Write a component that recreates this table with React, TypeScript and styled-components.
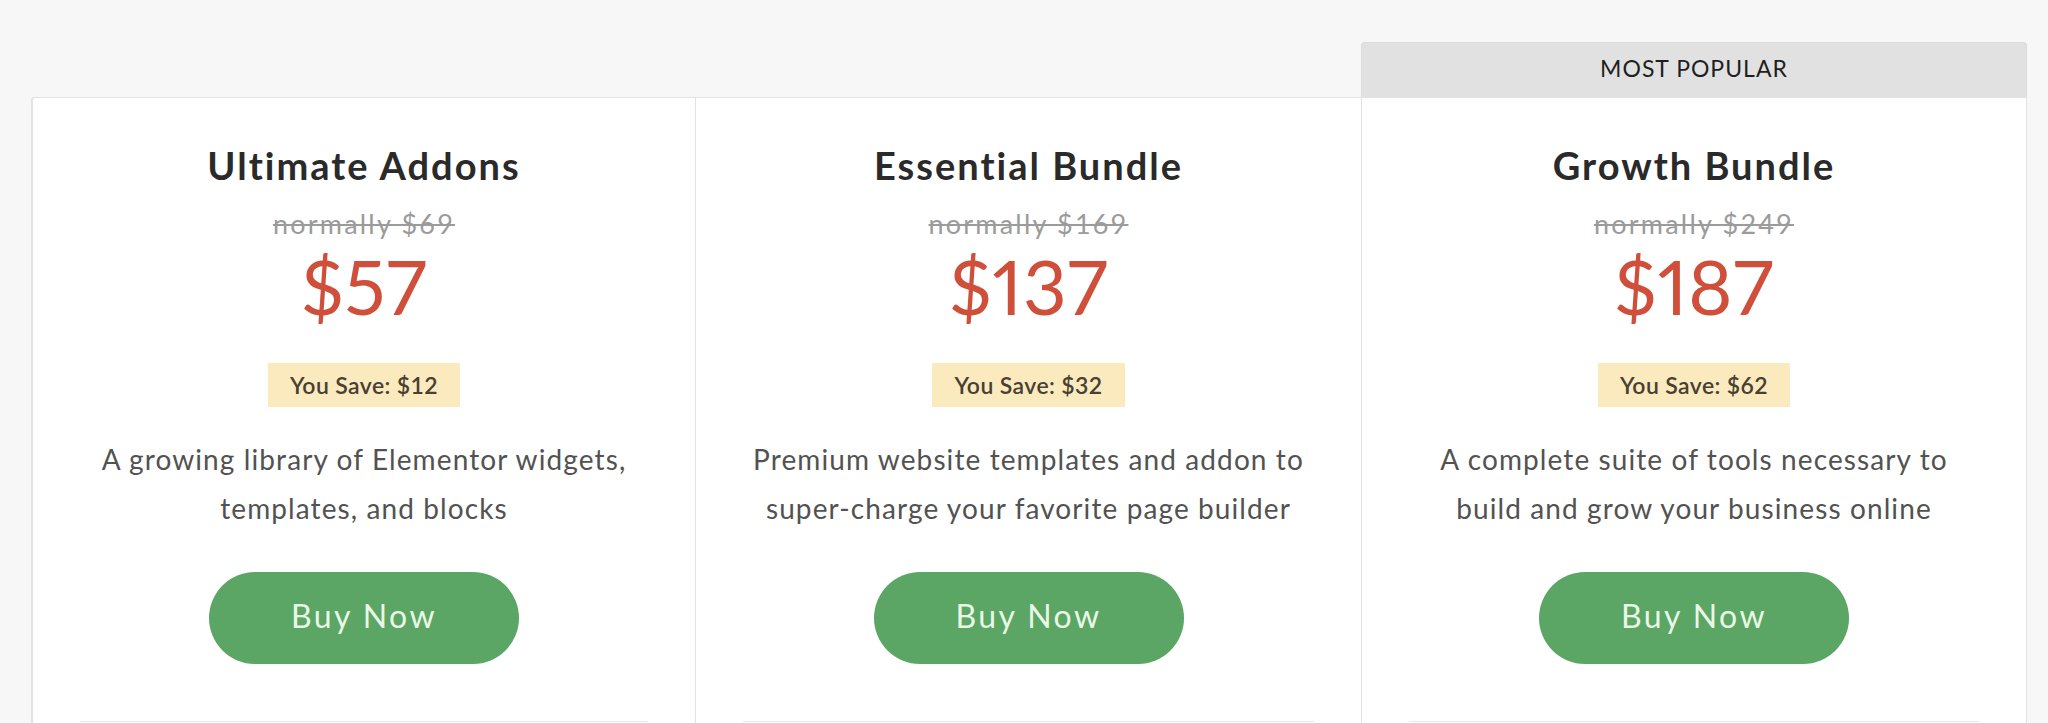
import React from "react";
import styled, { createGlobalStyle } from "styled-components";

const GlobalStyle = createGlobalStyle`
  html, body {
    margin: 0;
    padding: 0;
    background: #f7f7f7;
    font-family: Lato, "Open Sans", Arial, sans-serif;
    -webkit-font-smoothing: antialiased;
  }
  * { box-sizing: border-box; }
`;

const Page = styled.div`
  padding: 42px 21px 0 31px;
  height: 723px;
  overflow: hidden;
`;

const Grid = styled.div`
  display: grid;
  grid-template-columns: 664px 666px 666px;
`;

const Column = styled.div`
  display: flex;
  flex-direction: column;
`;

const BadgeSlot = styled.div<{ $popular?: boolean }>`
  height: 55px;
  padding-bottom: 4px;
  display: flex;
  align-items: center;
  justify-content: center;
  background: ${(p) => (p.$popular ? "#e1e1e1" : "transparent")};
  border: ${(p) => (p.$popular ? "1px solid #dcdcdc" : "none")};
  border-bottom: none;
  border-radius: 4px 4px 0 0;
  color: #1f1f1f;
  font-size: 23px;
  letter-spacing: 1px;
  text-transform: uppercase;
`;

const Card = styled.div<{ $first?: boolean; $last?: boolean }>`
  background: #ffffff;
  border-top: 1px solid #e2e2e2;
  border-left: ${(p) => (p.$first ? "2px" : "1px")} solid #e2e2e2;
  border-right: ${(p) => (p.$last ? "1px solid #e2e2e2" : "none")};
  border-top-left-radius: ${(p) => (p.$first ? "4px" : "0")};
  padding: 45px 47px 0;
  display: flex;
  flex-direction: column;
  align-items: center;
  text-align: center;
  min-height: 800px;
`;

const Title = styled.h2`
  margin: 0;
  font-size: 38px;
  line-height: 44px;
  font-weight: 700;
  color: #2a2a2a;
  letter-spacing: 2px;
`;

const OldPrice = styled.div`
  margin-top: 21px;
  font-size: 27px;
  line-height: 32px;
  color: #9b9b9b;
  text-decoration: line-through;
  letter-spacing: 2.2px;
`;

const Price = styled.div`
  margin-top: 6px;
  font-size: 76px;
  line-height: 80px;
  color: #cf4f3b;
  font-weight: 400;
  letter-spacing: 0.5px;
  font-variant-numeric: proportional-nums;
`;

const Save = styled.div`
  margin-top: 37px;
  height: 44px;
  padding: 0 22px;
  display: inline-flex;
  align-items: center;
  background: #fbeabe;
  color: #474033;
  font-size: 23px;
  font-weight: 600;
  letter-spacing: 0.4px;
`;

const Description = styled.p`
  margin: 28px 0 0;
  font-size: 28px;
  line-height: 49px;
  color: #525252;
  letter-spacing: 1.1px;
`;

const BuyButton = styled.button`
  margin-top: 39px;
  width: 310px;
  height: 92px;
  padding: 0 0 5px;
  border: none;
  border-radius: 46px;
  background: #5ba565;
  color: #e9f8e5;
  font-family: inherit;
  font-size: 32px;
  letter-spacing: 2.4px;
  cursor: pointer;
`;

const Features = styled.div`
  margin-top: 57px;
  align-self: stretch;
  border-top: 1px solid #e8e8e8;
  height: 80px;
`;

type Plan = {
  name: string;
  normal: string;
  price: string;
  save: string;
  lines: string[];
  popular?: boolean;
};

const plans: Plan[] = [
  {
    name: "Ultimate Addons",
    normal: "normally $69",
    price: "$57",
    save: "You Save: $12",
    lines: ["A growing library of Elementor widgets,", "templates, and blocks"],
  },
  {
    name: "Essential Bundle",
    normal: "normally $169",
    price: "$137",
    save: "You Save: $32",
    lines: ["Premium website templates and addon to", "super-charge your favorite page builder"],
  },
  {
    name: "Growth Bundle",
    normal: "normally $249",
    price: "$187",
    save: "You Save: $62",
    lines: ["A complete suite of tools necessary to", "build and grow your business online"],
    popular: true,
  },
];

export default function App() {
  return (
    <>
      <GlobalStyle />
      <Page>
        <Grid>
          {plans.map((p, i) => (
            <Column key={p.name}>
              <BadgeSlot $popular={p.popular}>{p.popular ? "Most Popular" : null}</BadgeSlot>
              <Card $first={i === 0} $last={i === plans.length - 1}>
                <Title>{p.name}</Title>
                <OldPrice>{p.normal}</OldPrice>
                <Price>{p.price}</Price>
                <Save>{p.save}</Save>
                <Description>
                  {p.lines[0]}
                  <br />
                  {p.lines[1]}
                </Description>
                <BuyButton>Buy Now</BuyButton>
                <Features />
              </Card>
            </Column>
          ))}
        </Grid>
      </Page>
    </>
  );
}
